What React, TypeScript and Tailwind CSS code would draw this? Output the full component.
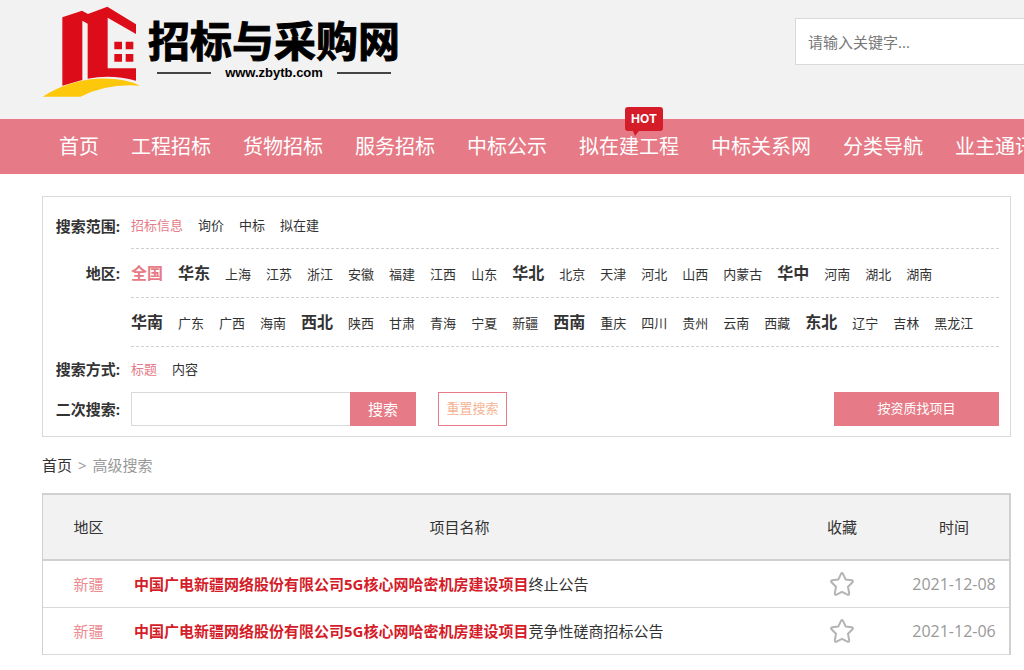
import React, { useState } from "react";

const navItems = [
  { name: "首页" },
  { name: "工程招标" },
  { name: "货物招标" },
  { name: "服务招标" },
  { name: "中标公示" },
  { name: "拟在建工程", hot: true },
  { name: "中标关系网" },
  { name: "分类导航" },
  { name: "业主通讯录" },
];

const scopes = ["招标信息", "询价", "中标", "拟在建"];
const modes = ["标题", "内容"];

// 大区加粗显示，后面跟着各省份
const regionRows = [
  [
    { area: "全国", provinces: [] },
    { area: "华东", provinces: ["上海", "江苏", "浙江", "安徽", "福建", "江西", "山东"] },
    { area: "华北", provinces: ["北京", "天津", "河北", "山西", "内蒙古"] },
    { area: "华中", provinces: ["河南", "湖北", "湖南"] },
  ],
  [
    { area: "华南", provinces: ["广东", "广西", "海南"] },
    { area: "西北", provinces: ["陕西", "甘肃", "青海", "宁夏", "新疆"] },
    { area: "西南", provinces: ["重庆", "四川", "贵州", "云南", "西藏"] },
    { area: "东北", provinces: ["辽宁", "吉林", "黑龙江"] },
  ],
];

const projects = [
  {
    region: "新疆",
    title: "中国广电新疆网络股份有限公司5G核心网哈密机房建设项目",
    type: "终止公告",
    date: "2021-12-08",
  },
  {
    region: "新疆",
    title: "中国广电新疆网络股份有限公司5G核心网哈密机房建设项目",
    type: "竞争性磋商招标公告",
    date: "2021-12-06",
  },
];

const Logo = () => (
  <a href="#" className="flex items-start gap-2 text-black">
    <svg viewBox="36 18 294 276" className="h-[92px] w-[98px]" aria-hidden="true">
      <path
        fill="#dc0c18"
        d="M97 52 L156 32 L174 42 L232 20 L318 73 V102 L233 53 V205 H318 V242 Q245 222 173 236 V71 L157 62 V240 L97 257 Z"
      />
      <path fill="#dc0c18" d="M253 125h23v23h-23z M287 125h23v23h-23z M253 162h23v23h-23z M287 162h23v23h-23z" />
      <path fill="#fdc70c" d="M38 290 Q110 243 200 236 Q280 232 330 257 Q230 250 152 290 Z" />
    </svg>
    <span className="flex flex-col items-center pt-3">
      <span className="text-[42px] leading-[46px] font-bold [-webkit-text-stroke:1px_black]">招标与采购网</span>
      <span className="flex items-center gap-[14px] font-['Liberation_Sans',sans-serif] text-[13px] leading-[18px] font-bold">
        <span className="h-[2px] w-[54px] bg-[#444]"></span>
        www.zbytb.com
        <span className="h-[2px] w-[54px] bg-[#444]"></span>
      </span>
    </span>
  </a>
);

const Header = () => (
  <header className="flex h-[119px] items-start justify-between bg-[#f2f2f2] pl-[42px]">
    <div className="pt-[6px]">
      <Logo />
    </div>
    <input
      type="search"
      aria-label="关键字"
      placeholder="请输入关键字..."
      className="mt-[18px] h-[47px] w-[229px] border border-r-0 border-[#d9d9d9] bg-white px-3 text-[15px] outline-none placeholder:text-[#777]"
    />
  </header>
);

const Nav = () => (
  <nav className="overflow-x-clip bg-[#e67a86]">
    <ul className="flex h-[55px] items-center gap-8 pt-px pl-[59px] text-xl whitespace-nowrap text-white">
      {navItems.map((item) => (
        <li key={item.name} className="relative">
          {item.hot && (
            <span className="absolute -top-[26px] left-[46px] h-6 w-[38px] rounded-[3px] bg-[#d51c29] text-center font-['Inter',sans-serif] text-xs leading-6 font-bold">
              HOT
              <svg viewBox="0 0 6 6" className="absolute top-full left-2 h-[6px] w-[6px]" aria-hidden="true">
                <path d="M0 0H6L2 5Z" fill="#d51c29" />
              </svg>
            </span>
          )}
          <a href="#" className="relative">{item.name}</a>
        </li>
      ))}
    </ul>
  </nav>
);

const Label = ({ children }: { children?: React.ReactNode }) => (
  <span className="w-[77px] shrink-0 text-right text-[15px] font-bold">{children}</span>
);

const SearchPanel = () => {
  const [scope, setScope] = useState("招标信息");
  const [region, setRegion] = useState("全国");
  const [mode, setMode] = useState("标题");
  const [keyword, setKeyword] = useState("");

  return (
    <section className="border border-[#d9d9d9] pt-[6px] pr-[11px] pb-[10px] text-[13px] whitespace-nowrap">
      <div className="flex items-center gap-[11px]">
        <Label>搜索范围:</Label>
        <div className="flex h-[46px] grow items-center gap-[15px] border-b border-dashed border-[#d0d0d0]">
          {scopes.map((s) => (
            <button key={s} onClick={() => setScope(s)} className={s === scope ? "text-[#e67a86]" : ""}>
              {s}
            </button>
          ))}
        </div>
      </div>

      {regionRows.map((row, i) => (
        <div key={i} className="flex items-center gap-[11px]">
          <Label>{i === 0 && "地区:"}</Label>
          <div className="flex h-[49px] grow items-center border-b border-dashed border-[#d0d0d0]">
            <div className="flex items-baseline gap-[15px]">
              {row.map(({ area, provinces }) => (
                <React.Fragment key={area}>
                  <button
                    onClick={() => setRegion(area)}
                    className={area === region ? "text-base font-bold text-[#e67a86]" : "text-base font-bold"}
                  >
                    {area}
                  </button>
                  {provinces.map((p) => (
                    <button key={p} onClick={() => setRegion(p)} className={p === region ? "text-[#e67a86]" : ""}>
                      {p}
                    </button>
                  ))}
                </React.Fragment>
              ))}
            </div>
          </div>
        </div>
      ))}

      <div className="flex h-[45px] items-center gap-[11px]">
        <Label>搜索方式:</Label>
        <div className="flex gap-[15px]">
          {modes.map((m) => (
            <button key={m} onClick={() => setMode(m)} className={m === mode ? "text-[#e67a86]" : ""}>
              {m}
            </button>
          ))}
        </div>
      </div>

      <form className="flex items-center gap-[11px]" onSubmit={(e) => e.preventDefault()}>
        <label htmlFor="keyword" className="w-[77px] shrink-0 text-right text-[15px] font-bold">
          二次搜索:
        </label>
        <div className="flex h-[34px] grow">
          <input
            id="keyword"
            value={keyword}
            onChange={(e) => setKeyword(e.target.value)}
            className="w-[219px] border border-r-0 border-[#d9d9d9] px-2 outline-none"
          />
          <button type="submit" className="w-[66px] bg-[#e67a86] text-[15px] text-white">搜索</button>
          <button
            type="button"
            onClick={() => setKeyword("")}
            className="ml-[22px] w-[69px] border border-[#e67a86] text-[#f6b493]"
          >
            重置搜索
          </button>
          <button type="button" className="ml-auto w-[165px] bg-[#e67a86] text-white">按资质找项目</button>
        </div>
      </form>
    </section>
  );
};

const ProjectTable = () => (
  <table className="w-full table-fixed border-separate border-spacing-0 border-t-2 border-r-2 border-l border-[#d0d0d0] text-[15px]">
    <thead>
      <tr className="h-[66px] bg-[#f2f2f2]">
        <th className="w-[91px] border-b-2 border-[#d0d0d0] font-normal">地区</th>
        <th className="border-b-2 border-[#d0d0d0] font-normal">项目名称</th>
        <th className="w-[114px] border-b-2 border-[#d0d0d0] font-normal">收藏</th>
        <th className="w-[110px] border-b-2 border-[#d0d0d0] font-normal">时间</th>
      </tr>
    </thead>
    <tbody>
      {projects.map((p) => (
        <tr key={p.type} className="h-[47px]">
          <td className="border-b border-[#d9d9d9] text-center text-[#ec8c90]">{p.region}</td>
          <td className="truncate border-b border-[#d9d9d9]">
            <a href="#">
              <b className="text-[#d51c29]">{p.title}</b>
              {p.type}
            </a>
          </td>
          <td className="border-b border-[#d9d9d9] text-center">
            <button aria-label="收藏" className="align-middle">
              <svg viewBox="0 0 24 24" className="h-6 w-6" fill="none" stroke="#b4b4b4" strokeWidth="2" strokeLinejoin="round">
                <path d="M11 1.8 Q12 .4 13 1.8 L15.6 7.4 L21.8 8.3 Q23.6 8.8 22.5 10.3 L18 14.7 L19.2 21.4 Q19.3 23.3 17.5 22.7 L12 19.8 L6.5 22.7 Q4.7 23.3 4.8 21.4 L6 14.7 L1.5 10.3 Q.4 8.8 2.2 8.3 L8.4 7.4 Z" />
              </svg>
            </button>
          </td>
          <td className="border-b border-[#d9d9d9] text-center text-base text-[#999]">{p.date}</td>
        </tr>
      ))}
    </tbody>
  </table>
);

const App = () => {
  return (
    <div className="min-h-screen bg-white font-['Open_Sans','Noto_Sans_CJK_SC',sans-serif] text-[#333]">
      <Header />
      <Nav />
      <main className="pt-[22px] pr-[13px] pb-4 pl-[42px]">
        <SearchPanel />
        <div className="flex h-14 items-center gap-[6px] text-[15px] text-[#999]">
          <a href="#" className="text-[#333]">首页</a>
          <span>&gt;</span>
          <span>高级搜索</span>
        </div>
        <ProjectTable />
      </main>
    </div>
  );
};

export default App;
